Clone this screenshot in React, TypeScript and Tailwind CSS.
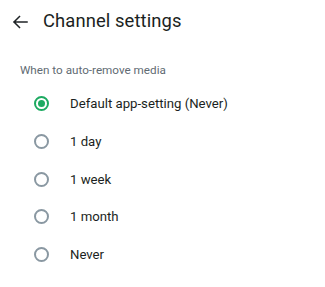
import React from "react";

const options = [
  "Default app-setting (Never)",
  "1 day",
  "1 week",
  "1 month",
  "Never",
];

export default function App() {
  return (
    <div
      className="w-[325px] h-[287px] bg-white overflow-hidden"
      style={{ fontFamily: "Roboto, 'Noto Sans', sans-serif" }}
    >
      <div className="flex items-center h-[40px] pl-[12px] pt-[3px]">
        <svg width="16" height="16" viewBox="0 0 16 16" className="text-[#1f2326]">
          <path
            d="M15 8H2M7.5 2.5L2 8l5.5 5.5"
            fill="none"
            stroke="currentColor"
            strokeWidth="1.5"
            strokeLinecap="square"
          />
        </svg>
        <div className="ml-[15px] text-[18.4px] text-[#1b1f22] leading-none tracking-[0.1px]">
          Channel settings
        </div>
      </div>
      <div className="pl-[20px] pt-[25px] text-[11.7px] text-[#5f6b73] leading-none">
        When to auto-remove media
      </div>
      <div className="flex flex-col pt-[8px]">
        {options.map((o, i) => (
          <div key={o} className="flex items-center h-[37.8px]">
            <div className="ml-[34px] w-[15px] h-[15px] flex items-center justify-center">
              {i === 0 ? (
                <div className="w-[15px] h-[15px] rounded-full border-2 border-[#1daa61] flex items-center justify-center">
                  <div className="w-[7px] h-[7px] rounded-full bg-[#1daa61]" />
                </div>
              ) : (
                <div className="w-[15px] h-[15px] rounded-full border-2 border-[#8a98a2]" />
              )}
            </div>
            <div className="ml-[21px] text-[13.2px] text-[#1b1f22] leading-none">{o}</div>
          </div>
        ))}
      </div>
    </div>
  );
}
